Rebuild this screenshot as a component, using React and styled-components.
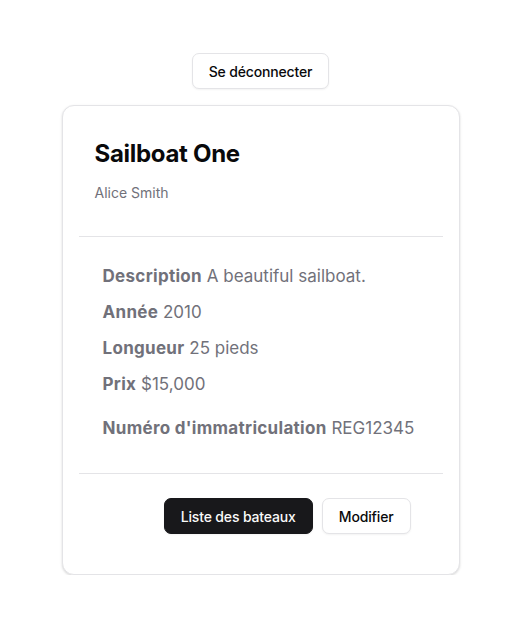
import React from 'react';
import styled, { createGlobalStyle } from 'styled-components';

const GlobalStyle = createGlobalStyle`
  body {
    margin: 0;
    background: #ffffff;
    font-family: Inter, "Liberation Sans", sans-serif;
    color: #09090b;
  }
`;

const Page = styled.div`
  display: flex;
  flex-direction: column;
  align-items: center;
  padding-top: 53px;
  gap: 16px;
`;

const Button = styled.button`
  height: 36px;
  padding: 0 16px;
  border-radius: 7px;
  font-family: inherit;
  font-size: 14px;
  font-weight: 500;
  letter-spacing: -0.15px;
  cursor: pointer;
  border: 1px solid ${p => (p.$primary ? '#18181b' : '#e4e4e7')};
  background: ${p => (p.$primary ? '#18181b' : '#ffffff')};
  color: ${p => (p.$primary ? '#fafafa' : '#09090b')};
  box-shadow: 0 1px 2px rgba(0, 0, 0, 0.05);
`;

const Card = styled.div`
  width: 364px;
  padding: 16px;
  border: 1px solid #e4e4e7;
  border-radius: 12px;
  background: #ffffff;
  box-shadow: 0 1px 3px rgba(0, 0, 0, 0.1), 0 1px 2px rgba(0, 0, 0, 0.06);
`;

const Header = styled.div`
  padding: 16px 16px 33px;
`;

const Title = styled.h2`
  margin: 0;
  font-size: 24px;
  line-height: 32px;
  font-weight: 700;
  letter-spacing: -0.3px;
`;

const Owner = styled.p`
  margin: 13px 0 0;
  font-size: 14px;
  line-height: 20px;
  color: #71717a;
`;

const Separator = styled.hr`
  margin: 0;
  border: none;
  border-top: 1px solid #e4e4e7;
`;

const Details = styled.div`
  display: flex;
  flex-direction: column;
  gap: 12px;
  padding: 27px 24px 33px;
`;

const Row = styled.p`
  margin: ${p => (p.$spaced ? '8px 0 0' : '0')};
  font-size: 17px;
  line-height: 24px;
  color: #71717a;
`;

const Label = styled.strong`
  font-weight: 700;
  letter-spacing: 0.3px;
`;

const Footer = styled.div`
  display: flex;
  justify-content: flex-end;
  gap: 9px;
  padding: 24px 32px 24px 0;
`;

const details = [
  ['Description', 'A beautiful sailboat.'],
  ['Année', '2010'],
  ['Longueur', '25 pieds'],
  ['Prix', '$15,000'],
  ["Numéro d'immatriculation", 'REG12345'],
];

export default function App() {
  return (
    <>
      <GlobalStyle />
      <Page>
        <Button>Se déconnecter</Button>
        <Card>
          <Header>
            <Title>Sailboat One</Title>
            <Owner>Alice Smith</Owner>
          </Header>
          <Separator />
          <Details>
            {details.map(([label, value], i) => (
              <Row key={label} $spaced={i === details.length - 1}>
                <Label>{label}</Label> {value}
              </Row>
            ))}
          </Details>
          <Separator />
          <Footer>
            <Button $primary>Liste des bateaux</Button>
            <Button>Modifier</Button>
          </Footer>
        </Card>
      </Page>
    </>
  );
}
